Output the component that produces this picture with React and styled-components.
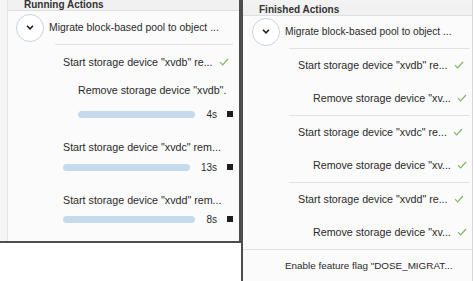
import React from 'react';
import styled, { createGlobalStyle } from 'styled-components';

const GlobalStyle = createGlobalStyle`
  * { box-sizing: border-box; }
  body {
    margin: 0;
    background: #fff;
    font-family: "Liberation Sans", Arial, Helvetica, sans-serif;
    color: #2a2a2a;
  }
`

const Page = styled.div`
  display: flex;
  align-items: flex-start;
  width: 474px;
  height: 281px;
  overflow: hidden;
`
const LeftPanel = styled.div`
  display: flex;
  width: 241px;
  height: 243px;
  padding-left: 7px;
  background: #f5f5f5;
  border-right: 2px solid #4d4d4d;
  border-bottom: 2px solid #4d4d4d;
`
const LeftInner = styled.div`
  flex: 1;
  display: flex;
  flex-direction: column;
  border-left: 1px solid #e4e4e4;
  background: #fbfbfb;
  overflow: hidden;
`
const RightPanel = styled.div`
  display: flex;
  flex-direction: column;
  width: 232px;
  height: 281px;
  background: #fbfbfb;
  border-left: 2px solid #4d4d4d;
  border-right: 1px solid #d6d6d6;
  overflow: hidden;
`
const TopStrip = styled.div`
  height: 3px;
  background: #f3f3f3;
`
const Header = styled.div`
  display: flex;
  align-items: ${props => props.$cut ? 'flex-end' : 'center'};
  height: ${props => props.$height}px;
  padding-left: 16px;
  background: #f1f1f1;
  border-bottom: 1px solid #dedede;
  font-size: 10px;
  font-weight: 700;
  line-height: ${props => props.$cut ? '11px' : '13px'};
  color: #333;
  overflow: hidden;
`
const ParentRow = styled.div`
  display: flex;
  align-items: center;
  gap: 5px;
  height: 33px;
  padding-left: ${props => props.$indent}px;
  font-size: ${props => props.$size || 10.4}px;
  white-space: nowrap;
`
const Toggle = styled.div`
  display: flex;
  align-items: center;
  justify-content: center;
  width: 28px;
  height: 28px;
  border-radius: 50%;
  border: 1px solid #c9d5e1;
  background: #fff;
  flex-shrink: 0;
`
const Sep = styled.div`
  height: 1px;
  background: #e2e2e2;
  margin-left: ${props => props.$left}px;
  margin-right: ${props => props.$right}px;
  flex-shrink: 0;
`
const ChildRow = styled.div`
  display: flex;
  align-items: center;
  gap: 6px;
  height: 33px;
  padding-left: ${props => props.$indent}px;
  font-size: 10.7px;
  white-space: nowrap;
  flex-shrink: 0;
`
const Running = styled.div`
  display: flex;
  flex-direction: column;
  margin-top: ${props => props.$top}px;
  padding-left: ${props => props.$indent}px;
  padding-right: 6px;
`
const RunLabel = styled.div`
  font-size: 10.7px;
  line-height: 14px;
  white-space: nowrap;
`
const BarRow = styled.div`
  display: flex;
  align-items: center;
  height: 12px;
  margin-top: ${props => props.$gap}px;
`
const Bar = styled.div`
  flex: 1;
  height: 7px;
  border-radius: 4px;
  background: #c6daee;
  margin-right: 11px;
`
const Time = styled.span`
  font-size: 10px;
`
const Stop = styled.div`
  width: 6px;
  height: 6px;
  margin-left: 10px;
  background: #1e1e1e;
`

const Chevron = () => (
  <svg width="8" height="5" viewBox="0 0 8 5">
    <polyline points="1,0.8 4,3.8 7,0.8" fill="none" stroke="#1f1f1f" strokeWidth="1.6" />
  </svg>
)

const Check = () => (
  <svg width="10" height="8" viewBox="0 0 10 8">
    <polyline points="1,4.2 3.6,6.8 9,1" fill="none" stroke="#7cb961" strokeWidth="1.2" />
  </svg>
)

function App() {
  return (
    <Page>
      <GlobalStyle />

      <LeftPanel>
        <LeftInner>
          <Header $height={11} $cut>Running Actions</Header>
          <ParentRow $indent={8}>
            <Toggle><Chevron /></Toggle>
            Migrate block-based pool to object ...
          </ParentRow>
          <Sep $left={47} $right={6} />

          <ChildRow $indent={55}>Start storage device "xvdb" re... <Check /></ChildRow>

          <Running $indent={70} $top={5}>
            <RunLabel>Remove storage device "xvdb".</RunLabel>
            <BarRow $gap={11}>
              <Bar />
              <Time>4s</Time>
              <Stop />
            </BarRow>
          </Running>

          <Running $indent={55} $top={20}>
            <RunLabel>Start storage device "xvdc" rem...</RunLabel>
            <BarRow $gap={7}>
              <Bar />
              <Time>13s</Time>
              <Stop />
            </BarRow>
          </Running>

          <Running $indent={55} $top={20}>
            <RunLabel>Start storage device "xvdd" rem...</RunLabel>
            <BarRow $gap={6}>
              <Bar />
              <Time>8s</Time>
              <Stop />
            </BarRow>
          </Running>
        </LeftInner>
      </LeftPanel>

      <RightPanel>
        <TopStrip />
        <Header $height={14}>Finished Actions</Header>
        <ParentRow $indent={9} $size={10.2}>
          <Toggle><Chevron /></Toggle>
          Migrate block-based pool to object ...
        </ParentRow>
        <Sep $left={46} $right={2} />

        <ChildRow $indent={55}>Start storage device "xvdb" re... <Check /></ChildRow>
        <ChildRow $indent={70}>Remove storage device "xv... <Check /></ChildRow>
        <Sep $left={46} $right={2} />
        <ChildRow $indent={55}>Start storage device "xvdc" re... <Check /></ChildRow>
        <ChildRow $indent={70}>Remove storage device "xv... <Check /></ChildRow>
        <Sep $left={46} $right={2} />
        <ChildRow $indent={55}>Start storage device "xvdd" re... <Check /></ChildRow>
        <ChildRow $indent={70}>Remove storage device "xv... <Check /></ChildRow>
        <Sep $left={0} $right={0} />

        <ParentRow $indent={42} $size={9.9}>Enable feature flag "DOSE_MIGRAT...</ParentRow>
      </RightPanel>
    </Page>
  )
}

export default App
